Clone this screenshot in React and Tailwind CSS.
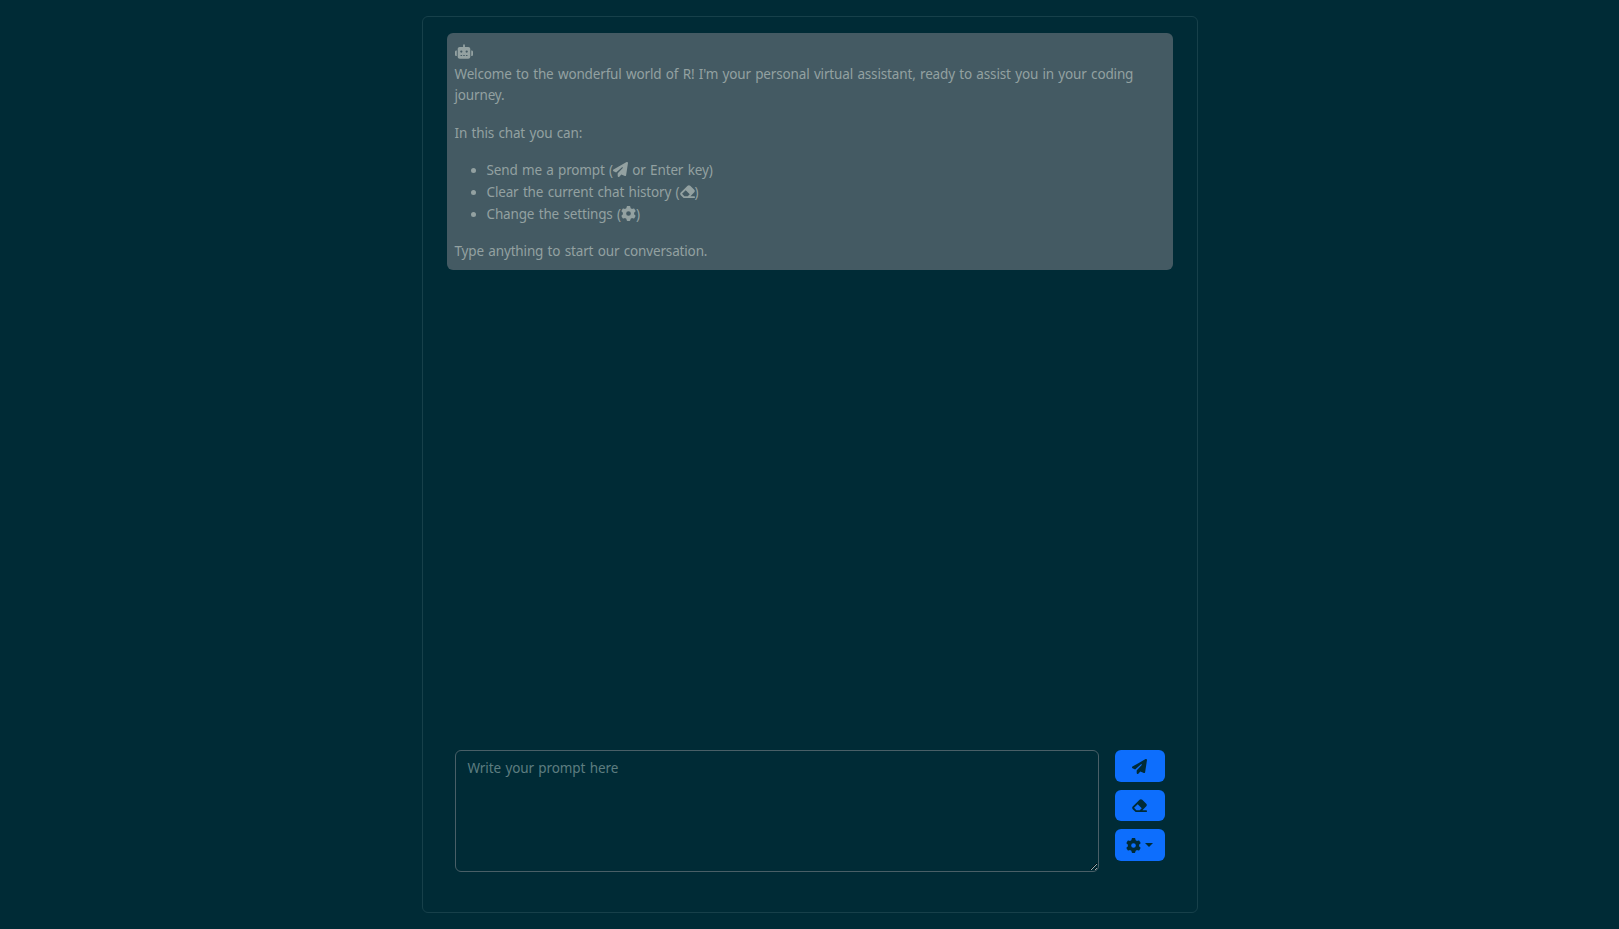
import { FaRobot, FaPaperPlane, FaGear } from "react-icons/fa6";

function Eraser({ className }) {
  return (
    <svg viewBox="0 0 512 512" fill="currentColor" className={className}>
      <path d="M480 416C497.7 416 512 430.3 512 448C512 465.7 497.7 480 480 480H150.6C133.7 480 117.4 473.3 105.4 461.3L25.37 381.3C.3786 356.3 .3786 315.7 25.37 290.7L258.7 57.37C283.7 32.38 324.3 32.38 349.3 57.37L486.6 194.7C511.6 219.7 511.6 260.3 486.6 285.3L355.9 416H480zM265.4 416L332.7 348.7L195.3 211.3L70.63 336L150.6 416L265.4 416z" />
    </svg>
  );
}

function IconButton({ className, label, children }) {
  return (
    <button aria-label={label} className={`flex w-[50px] items-center justify-center rounded-md bg-[#0d6efd] text-[#002b36] ${className}`}>
      {children}
    </button>
  );
}

function Welcome() {
  return (
    <section className="h-[237px] rounded-md bg-[#445a63] px-2 pt-2">
      <div className="flex h-[23px] items-start pt-[3px]">
        <FaRobot className="h-[15px] w-[18px]" />
      </div>
      <p className="mb-[17px] leading-[21px]">
        <span className="whitespace-nowrap">Welcome to the wonderful world of R! I'm your personal virtual assistant, ready to assist you in your coding</span>
        <br />
        journey.
      </p>
      <p className="mb-[15px] leading-[21px]">In this chat you can:</p>
      <ul className="mb-4 list-disc pl-8 leading-[22px]">
        <li>Send me a prompt (<FaPaperPlane className="inline size-[15px] align-[-2px]" /> or Enter key)</li>
        <li>Clear the current chat history (<Eraser className="inline size-[15px] align-[-2px]" />)</li>
        <li>Change the settings (<FaGear className="inline size-[15px] align-[-2px]" />)</li>
      </ul>
      <p className="leading-[21px]">Type anything to start our conversation.</p>
    </section>
  );
}

export default function App() {
  return (
    <div className="flex h-[929px] justify-center bg-[#002b36] pt-4 font-['Noto_Sans',sans-serif] text-[13.5px] tracking-[-0.15px] [word-spacing:1px] text-[#93a1a1]">
      <main className="flex h-[897px] w-[776px] flex-col justify-between rounded-md border border-[#17404a] px-6 pt-4 pb-10">
        <Welcome />
        <div className="flex gap-4 px-2">
          <textarea placeholder="Write your prompt here" className="h-[122px] w-[644px] resize rounded-md border border-[#495f67] bg-transparent px-3 pt-[7px] pb-[6px] leading-[21px] tracking-[-0.1px] [word-spacing:1px] placeholder:text-[#5d7d80]" />
          <div className="flex flex-col gap-2">
            <IconButton label="Send" className="h-8"><FaPaperPlane className="size-[15px]" /></IconButton>
            <IconButton label="Clear" className="h-[31px]"><Eraser className="size-[15px]" /></IconButton>
            <IconButton label="Settings" className="h-8 gap-1">
              <FaGear className="size-[15px]" />
              <span className="border-x-4 border-t-4 border-x-transparent border-t-[#002b36]" />
            </IconButton>
          </div>
        </div>
      </main>
    </div>
  );
}
